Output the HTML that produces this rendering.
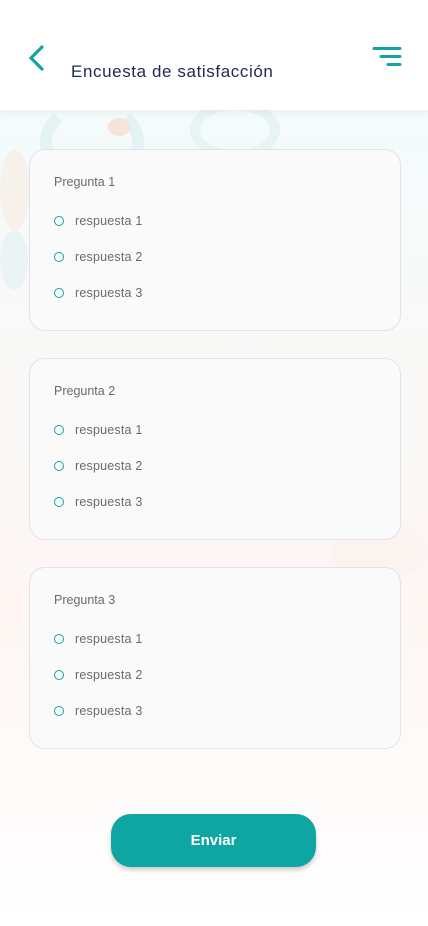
<!DOCTYPE html>
<html><head><meta charset="utf-8"><style>
body{margin:0;width:428px;height:926px;position:relative;overflow:hidden;background:#fff;font-family:"Liberation Sans",sans-serif}
.bg{position:absolute;left:0;top:110px;width:428px;height:816px;background:linear-gradient(180deg,#f4fbfb 0%,#fdf6f3 60%,#fff 100%)}
.blob{position:absolute;border-radius:50%}
.hdr{position:absolute;left:0;top:0;width:428px;height:110px;background:#fff;box-shadow:0 2px 8px rgba(0,0,0,.06)}
.title{position:absolute;left:71px;top:62px;font-size:17px;letter-spacing:0.6px;color:#1d2a4f}
.card{position:absolute;left:29px;width:370px;height:180px;background:#fafafb;border:1px solid #e2e2ea;border-radius:16px}
.q{position:absolute;left:24px;top:25px;font-size:12.5px;color:#6b6b6b}
.opt{position:absolute;left:24px;font-size:12.5px;letter-spacing:0.2px;color:#6b6b6b}
.opt i{display:inline-block;width:8px;height:8px;border:1.5px solid #14a6a4;border-radius:50%;vertical-align:-1px;margin-right:11px}
.btn{position:absolute;left:111px;top:814px;width:205px;height:53px;background:#0ea5a3;border-radius:20px;box-shadow:0 3px 5px rgba(0,0,0,.2);color:#fff;font-weight:bold;font-size:15px;text-align:center;line-height:53px}
</style></head><body>
<div class="bg"></div>
<div class="blob" style="left:40px;top:100px;width:80px;height:60px;border:12px solid #e3f3f3;border-top-color:transparent"></div>
<div class="blob" style="left:108px;top:118px;width:22px;height:18px;background:#f6e4d8"></div>
<div class="blob" style="left:0;top:150px;width:30px;height:80px;background:#f8ece4;opacity:.7"></div>
<div class="blob" style="left:0;top:230px;width:28px;height:60px;background:#e6f3f2;opacity:.8"></div>
<div class="blob" style="left:190px;top:100px;width:70px;height:40px;border:10px solid #e8f4f4"></div>
<div class="blob" style="left:330px;top:520px;width:98px;height:60px;background:#fbf1ec;opacity:.6"></div>
<div class="hdr">
<svg style="position:absolute;left:26px;top:44px" width="22" height="28"><path d="M16 3 L5 14 L16 25" fill="none" stroke="#13a3a2" stroke-width="3.2" stroke-linecap="round"/></svg>
<div class="title">Encuesta de satisfacción</div>
<svg style="position:absolute;left:370px;top:44px" width="34" height="26"><g stroke="#13a3a2" stroke-width="3" stroke-linecap="round"><path d="M4 4.5H30M11 12.5H30M18 20.5H30"/></g></svg>
</div>
<div class="card" style="top:149px"><div class="q">Pregunta 1</div><div class="opt" style="top:64px"><i></i>respuesta 1</div><div class="opt" style="top:100px"><i></i>respuesta 2</div><div class="opt" style="top:136px"><i></i>respuesta 3</div></div>
<div class="card" style="top:358px"><div class="q">Pregunta 2</div><div class="opt" style="top:64px"><i></i>respuesta 1</div><div class="opt" style="top:100px"><i></i>respuesta 2</div><div class="opt" style="top:136px"><i></i>respuesta 3</div></div>
<div class="card" style="top:567px"><div class="q">Pregunta 3</div><div class="opt" style="top:64px"><i></i>respuesta 1</div><div class="opt" style="top:100px"><i></i>respuesta 2</div><div class="opt" style="top:136px"><i></i>respuesta 3</div></div>
<div class="btn">Enviar</div>
</body></html>
